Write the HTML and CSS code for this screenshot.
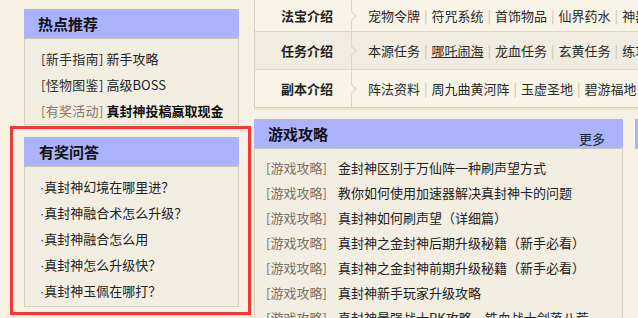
FILE: index.html
```html
<!DOCTYPE html>
<html lang="zh">
<head>
<meta charset="utf-8">
<title>真封神</title>
<link rel="stylesheet" href="styles.css">
</head>
<body>
<div class="page">
  <aside class="left">
    <section class="box">
      <h2 class="box-head">热点推荐</h2>
      <ul class="box-body">
        <li><span class="cat">[新手指南]</span> 新手攻略</li>
        <li><span class="cat">[怪物图鉴]</span> 高级BOSS</li>
        <li><span class="cat muted">[有奖活动]</span> <b>真封神投稿赢取现金</b></li>
      </ul>
    </section>
    <section class="box box-qa">
      <h2 class="box-head">有奖问答</h2>
      <ul class="box-body qa">
        <li><span class="dot">·</span>真封神幻境在哪里进？</li>
        <li><span class="dot">·</span>真封神融合术怎么升级？</li>
        <li><span class="dot">·</span>真封神融合怎么用</li>
        <li><span class="dot">·</span>真封神怎么升级快？</li>
        <li><span class="dot">·</span>真封神玉佩在哪打？</li>
      </ul>
    </section>
    <section class="box box-next">
      <h2 class="box-head">游戏资料</h2>
    </section>
  </aside>
  <main class="right">
    <nav class="nav">
      <div class="nav-row first">
        <div class="nav-label">法宝介绍</div>
        <div class="nav-links">宠物令牌<span class="sep">|</span>符咒系统<span class="sep">|</span>首饰物品<span class="sep">|</span>仙界药水<span class="sep">|</span>神器图鉴</div>
      </div>
      <div class="nav-row alt">
        <div class="nav-label">任务介绍</div>
        <div class="nav-links">本源任务<span class="sep">|</span><u>哪吒闹海</u><span class="sep">|</span>龙血任务<span class="sep">|</span>玄黄任务<span class="sep">|</span>练功任务</div>
      </div>
      <div class="nav-row">
        <div class="nav-label">副本介绍</div>
        <div class="nav-links">阵法资料<span class="sep">|</span>周九曲黄河阵<span class="sep">|</span>玉虚圣地<span class="sep">|</span>碧游福地</div>
      </div>
    </nav>
    <div class="guides">
      <section class="guide">
        <div class="guide-head"><h2>游戏攻略</h2><span class="more">更多</span></div>
        <ul class="guide-body">
          <li><span class="tag">[游戏攻略]</span>金封神区别于万仙阵一种刷声望方式</li>
          <li><span class="tag">[游戏攻略]</span>教你如何使用加速器解决真封神卡的问题</li>
          <li><span class="tag">[游戏攻略]</span>真封神如何刷声望（详细篇）</li>
          <li><span class="tag">[游戏攻略]</span>真封神之金封神后期升级秘籍（新手必看）</li>
          <li><span class="tag">[游戏攻略]</span>真封神之金封神前期升级秘籍（新手必看）</li>
          <li><span class="tag">[游戏攻略]</span>真封神新手玩家升级攻略</li>
          <li><span class="tag">[游戏攻略]</span>真封神最强战士PK攻略，铁血战士剑落八荒</li>
        </ul>
      </section>
      <section class="guide guide-side">
        <div class="guide-head"><h2>新闻</h2></div>
      </section>
    </div>
  </main>
</div>
<div class="annot"></div>
</body>
</html>
```
FILE: styles.css
```css
* { box-sizing: border-box; }
html, body { margin: 0; padding: 0; }
body {
  background: #f6f1e3;
  font-family: "Noto Sans CJK SC", "Microsoft YaHei", sans-serif;
  font-size: 13px;
  color: #222;
  overflow: hidden;
  height: 318px;
}
ul { list-style: none; margin: 0; }
h2 { margin: 0; }

.page {
  display: flex;
  align-items: flex-start;
  padding-left: 24px;
  gap: 15px;
}

.left {
  width: 215px;
  flex: none;
  padding-top: 9px;
}
.box + .box { margin-top: 12px; }
.box-head {
  height: 30px;
  line-height: 29px;
  background: #abb3ff;
  border-bottom: 1px solid #cfc7ad;
  font-size: 15px;
  font-weight: bold;
  color: #111;
  padding-left: 14px;
}
.box-qa .box-head { padding-left: 15px; }
.box-body {
  background: #f3eee2;
  border: 1px solid #d8d0b8;
  border-top: none;
  padding: 7px 0 0 16px;
  line-height: 26px;
  white-space: nowrap;
}
.box-body li { height: 26px; }
.box-body .cat { color: #2e2e2e; letter-spacing: 0.3px; }
.box-body .cat.muted { color: #857760; }
.box-body b { color: #111; }
.box-body.qa { padding: 7px 0 2px 15px; }
.dot {
  font-family: "Liberation Sans", Arial, sans-serif;
  line-height: 0;
}

.right {
  flex: 1;
  min-width: 0;
  overflow: hidden;
}
.nav {
  width: 420px;
  border-left: 1px solid #d8d0b8;
  border-bottom: 1px solid #d3cab0;
  box-shadow: 0 2px 0 #ece5d2;
}
.nav-row {
  display: flex;
  align-items: stretch;
  height: 38px;
  background: #f8f4e8;
  border-bottom: 1px solid #e0d9c5;
}
.nav-row.first { height: 32px; }
.nav-row.alt { background: #f1ece0; }
.nav-row:last-child { border-bottom: none; height: 37px; }
.nav-label {
  position: relative;
  width: 97px;
  flex: none;
  display: flex;
  align-items: center;
  padding-left: 26px;
  font-weight: bold;
  color: #222;
  border-right: 1px solid #ddd5c1;
}
.nav-label::after {
  content: "";
  position: absolute;
  right: -4px;
  top: 50%;
  width: 7px;
  height: 7px;
  margin-top: -4px;
  border-top: 1px solid #ddd5c1;
  border-right: 1px solid #ddd5c1;
  background: inherit;
  transform: rotate(45deg);
}
.nav-row .nav-label { background: inherit; }
.nav-links {
  display: flex;
  align-items: center;
  padding-left: 16px;
  white-space: nowrap;
  color: #2a2a2a;
}
.nav-links u { color: #2a2a2a; }
.sep { color: #c9c1ad; margin: 0 4px; }

.guides {
  display: flex;
  gap: 12px;
  margin-top: 11px;
}
.guide { width: 369px; flex: none; }
.guide-side { width: 200px; }
.guide-head {
  display: flex;
  justify-content: space-between;
  height: 30px;
  background: #abb3ff;
  border-bottom: 1px solid #cfc7ad;
  padding: 0 18px 0 14px;
}
.guide-head h2 {
  font-size: 15px;
  line-height: 29px;
  color: #111;
}
.more {
  font-size: 13px;
  line-height: 13px;
  padding-top: 13px;
  color: #222;
}
.guide-body {
  background: #f3eee2;
  border: 1px solid #d8d0b8;
  border-top: none;
  padding: 6px 0 0 11px;
  line-height: 25px;
  white-space: nowrap;
  height: 200px;
}
.tag {
  display: inline-block;
  width: 72px;
  color: #7d6f5c;
}

.annot {
  position: absolute;
  left: 10px;
  top: 126px;
  width: 241px;
  height: 189px;
  border: 3px solid #ef3a3a;
  pointer-events: none;
}
```
